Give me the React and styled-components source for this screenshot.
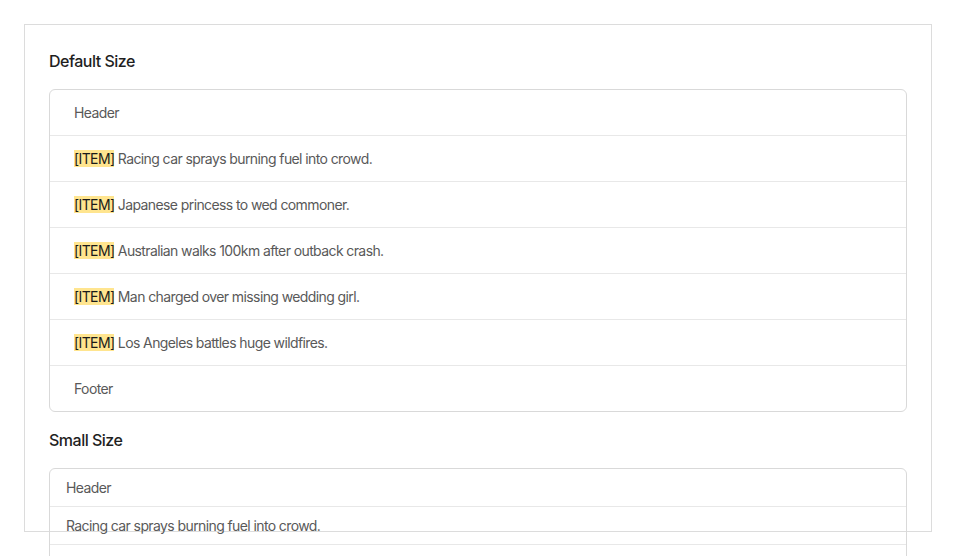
import React from "react";
import styled, { createGlobalStyle } from "styled-components";

const GlobalStyle = createGlobalStyle`
  html, body {
    margin: 0;
    padding: 0;
    background: #fff;
    font-family: Inter, "Noto Sans", "Liberation Sans", sans-serif;
    letter-spacing: -0.6px;
  }
  * { box-sizing: border-box; }
`;

// Outer demo frame: fixed to the viewport, list content may spill past it
const Frame = styled.div`
  margin: 24px;
  height: calc(100vh - 48px);
  border: 1px solid #dcdcdc;
  padding: 24px;
`;

const Title = styled.h4`
  margin: 0 0 16px;
  font-size: 16px;
  line-height: 24px;
  font-weight: 500;
  letter-spacing: -0.5px;
  color: #1f1f1f;
`;

const List = styled.div`
  border: 1px solid #d9d9d9;
  border-radius: 6px;
  margin-bottom: 16px;
  color: #595959;
  font-size: 14px;
`;

const Row = styled.div`
  padding: ${(p) => (p.$small ? "8px 16px" : "12px 24px")};
  line-height: 21px;
  border-bottom: 1px solid #e8e8e8;

  &:last-child {
    border-bottom: none;
  }
`;

const Mark = styled.mark`
  background: #ffe58f;
  color: #1a1a1a;
  padding: 0;
`;

const news = [
  "Racing car sprays burning fuel into crowd.",
  "Japanese princess to wed commoner.",
  "Australian walks 100km after outback crash.",
  "Man charged over missing wedding girl.",
  "Los Angeles battles huge wildfires.",
];

function App() {
  return (
    <>
      <GlobalStyle />
      <Frame>
        <Title>Default Size</Title>
        <List>
          <Row>Header</Row>
          {news.map((item, i) => (
            <Row key={i}>
              <Mark>[ITEM]</Mark> {item}
            </Row>
          ))}
          <Row>Footer</Row>
        </List>

        <Title>Small Size</Title>
        <List>
          <Row $small>Header</Row>
          {news.map((item, i) => (
            <Row $small key={i}>
              {item}
            </Row>
          ))}
          <Row $small>Footer</Row>
        </List>
      </Frame>
    </>
  );
}

export default App;
